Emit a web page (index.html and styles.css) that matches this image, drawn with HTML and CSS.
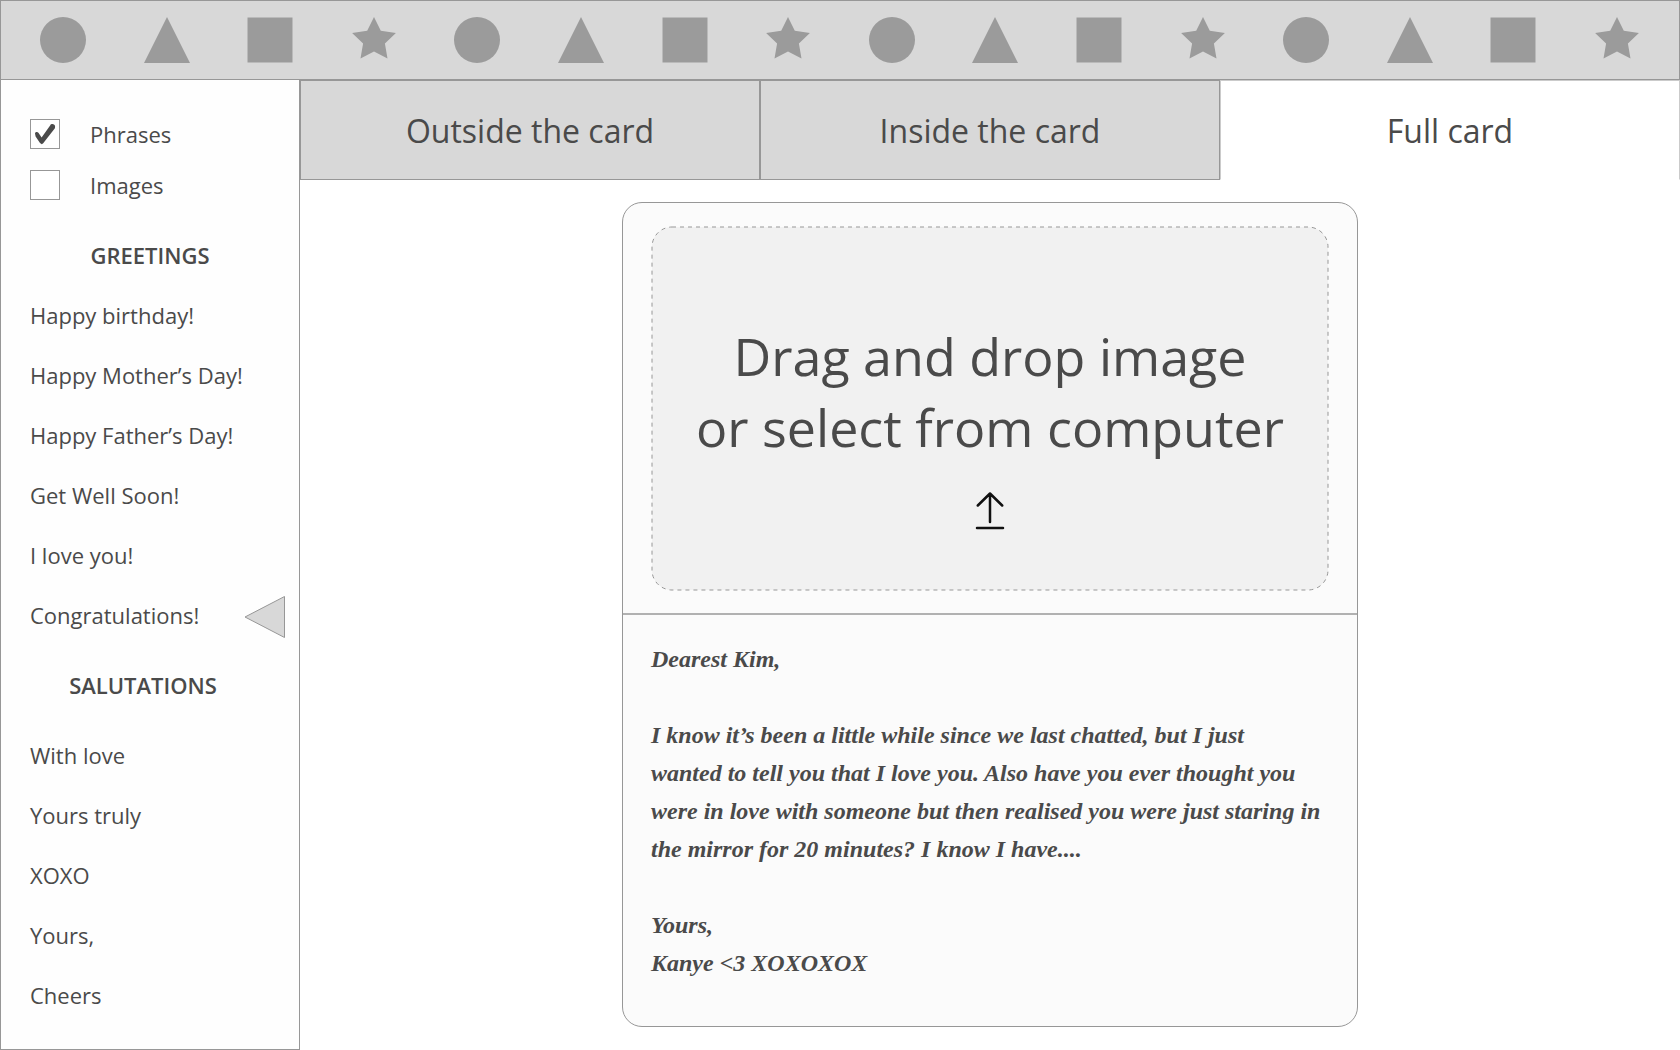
FILE: index.html
```html
<!DOCTYPE html>
<html lang="en">
<head>
<meta charset="utf-8">
<meta name="viewport" content="width=device-width, initial-scale=1">
<title>Card maker</title>
<link rel="stylesheet" href="styles.css">
</head>
<body>
<svg width="0" height="0" class="sprite" aria-hidden="true">
  <symbol id="circle" viewBox="0 0 46 46"><circle cx="23" cy="23" r="23"/></symbol>
  <symbol id="triangle" viewBox="0 0 46 46"><path d="M23 0 46 46H0z"/></symbol>
  <symbol id="square" viewBox="0 0 46 46"><path d="M.5.5h45v45H.5z"/></symbol>
  <symbol id="star" viewBox="0 0 46 46"><path d="M23 0 29.8 13.7 44.9 15.9 33.9 26.6 36.5 41.6 23 34.5 9.5 41.6 12.1 26.6 1.1 15.9 16.2 13.7z"/></symbol>
</svg>
<header class="banner">
  <svg class="shape"><use href="#circle"/></svg>
  <svg class="shape"><use href="#triangle"/></svg>
  <svg class="shape"><use href="#square"/></svg>
  <svg class="shape"><use href="#star"/></svg>
  <svg class="shape"><use href="#circle"/></svg>
  <svg class="shape"><use href="#triangle"/></svg>
  <svg class="shape"><use href="#square"/></svg>
  <svg class="shape"><use href="#star"/></svg>
  <svg class="shape"><use href="#circle"/></svg>
  <svg class="shape"><use href="#triangle"/></svg>
  <svg class="shape"><use href="#square"/></svg>
  <svg class="shape"><use href="#star"/></svg>
  <svg class="shape"><use href="#circle"/></svg>
  <svg class="shape"><use href="#triangle"/></svg>
  <svg class="shape"><use href="#square"/></svg>
  <svg class="shape"><use href="#star"/></svg>
</header>
<div class="layout">
  <aside class="sidebar">
    <div class="filters">
      <label class="filter">
        <input class="filter-box" type="checkbox" checked>
        <svg class="filter-tick" viewBox="0 0 30 30" aria-hidden="true"><path d="M5 14.6C4.8 12.8 7.600 12.200 8.600 14L11.600 18.400 20.300 6.200C21.300 4.200 25.300 5 25.100 7.800L24.900 9.200 13.200 24.200 11.800 25.200 10 24.100 5.600 17.500z"/></svg>
        <span>Phrases</span>
      </label>
      <label class="filter">
        <input class="filter-box" type="checkbox">
        <svg class="filter-tick" viewBox="0 0 30 30" aria-hidden="true"><path d="M5 14.6C4.8 12.8 7.600 12.200 8.600 14L11.600 18.400 20.300 6.200C21.300 4.200 25.300 5 25.100 7.800L24.900 9.200 13.200 24.200 11.800 25.200 10 24.100 5.600 17.500z"/></svg>
        <span>Images</span>
      </label>
    </div>
    <h2 class="group-title">GREETINGS</h2>
    <ul class="phrases">
      <li><button class="phrase" type="button">Happy birthday!</button></li>
      <li><button class="phrase" type="button">Happy Mother’s Day!</button></li>
      <li><button class="phrase" type="button">Happy Father’s Day!</button></li>
      <li><button class="phrase" type="button">Get Well Soon!</button></li>
      <li><button class="phrase" type="button">I love you!</button></li>
      <li><button class="phrase" type="button">Congratulations!
        <svg class="pointer" viewBox="0 0 42 46" aria-hidden="true"><path d="M1 25 40.500 4.500V45.500z"/></svg></button></li>
    </ul>
    <h2 class="group-title group-title-salutations">SALUTATIONS</h2>
    <ul class="phrases">
      <li><button class="phrase" type="button">With love</button></li>
      <li><button class="phrase" type="button">Yours truly</button></li>
      <li><button class="phrase" type="button">XOXO</button></li>
      <li><button class="phrase" type="button">Yours,</button></li>
      <li><button class="phrase" type="button">Cheers</button></li>
    </ul>
  </aside>
  <main class="workspace">
    <div class="tabs" role="tablist">
      <button class="tab" type="button" role="tab" aria-selected="false">Outside the card</button>
      <button class="tab" type="button" role="tab" aria-selected="false">Inside the card</button>
      <button class="tab" type="button" role="tab" aria-selected="true">Full card</button>
    </div>
    <article class="card">
      <section class="card-front">
        <label class="dropzone">
          <svg class="dropzone-outline" aria-hidden="true"><rect width="100%" height="100%" rx="20"/></svg>
          <input class="file-input" type="file" accept="image/*">
          <span>Drag and drop image<br>or select from computer</span>
          <svg class="upload" viewBox="0 0 32 40" aria-hidden="true"><path d="M16 2.500V31M3.800 14.500 16 2.500 28.200 14.500M3 37H29"/></svg>
        </label>
      </section>
      <section class="letter">
        <p>Dearest Kim,</p>
        <p>I know it’s been a little while since we last chatted, but I just<br>wanted to tell you that I love you. Also have you ever thought you<br>were in love with someone but then realised you were just staring in<br>the mirror for 20 minutes? I know I have....</p>
        <p>Yours,<br>Kanye &lt;3 XOXOXOX</p>
      </section>
    </article>
  </main>
</div>
</body>
</html>
```
FILE: styles.css
```css
* { box-sizing: border-box; }

body {
  margin: 0;
  min-height: 100vh;
  display: flex;
  flex-direction: column;
  background: #fff;
  color: #4a4a4a;
  font: 22px/30px "Open Sans", sans-serif;
}

button {
  font: inherit;
  color: inherit;
  cursor: pointer;
}

.sprite { display: none; }

.banner {
  display: flex;
  justify-content: space-between;
  padding: 16px 39px;
  border: 1px solid #979797;
  background: #d8d8d8;
}

.shape {
  width: 46px;
  height: 46px;
  fill: #9b9b9b;
}

.layout {
  flex: 1;
  display: grid;
  grid-template-columns: 300px minmax(0, 1fr);
}

.sidebar {
  padding: 39px 13px 20px 29px;
  border: solid #979797;
  border-width: 0 1px 1px;
  background: #fefefe;
}

.filters {
  display: grid;
  gap: 21px;
  margin-bottom: 25px;
}

.filter {
  display: grid;
  grid-template-columns: 30px 1fr;
  column-gap: 30px;
}

.filter-box,
.filter-tick {
  grid-area: 1 / 1;
  width: 30px;
  height: 30px;
}

.filter-box {
  appearance: none;
  margin: 0;
  border: 1px solid #979797;
  background: #fff;
}

.filter-tick {
  fill: #4a4a4a;
  visibility: hidden;
  pointer-events: none;
}

.filter-box:checked + .filter-tick { visibility: visible; }

.group-title {
  margin: 0;
  padding-right: 16px;
  font-size: 22px;
  font-weight: 600;
  line-height: 60px;
  text-align: center;
}

.group-title-salutations {
  padding-right: 30px;
  line-height: 80px;
}

.phrases {
  margin: 0;
  padding: 0;
  list-style: none;
}

.phrase {
  display: flex;
  align-items: center;
  justify-content: space-between;
  width: 100%;
  height: 60px;
  padding: 0;
  border: 0;
  background: none;
  text-align: left;
}

.pointer {
  width: 42px;
  height: 46px;
  fill: #d8d8d8;
  stroke: #979797;
}

.workspace {
  display: flex;
  flex-direction: column;
  align-items: center;
}

.tabs {
  display: grid;
  grid-template-columns: repeat(3, 1fr);
  width: 100%;
  margin-bottom: 22px;
}

.tab {
  height: 100px;
  padding: 2px 0 0;
  border: 1px solid #979797;
  background: #d8d8d8;
  font-size: 32px;
}

.tab[aria-selected="true"] {
  border-color: #cbcbcb;
  border-bottom-color: #fff;
  background: #fff;
}

.card {
  width: 100%;
  max-width: 736px;
  margin-bottom: 23px;
  border: 1px solid #979797;
  border-radius: 20px;
  background: #fbfbfb;
}

.card-front {
  padding: 24px 29px 23px;
  border-bottom: 2px solid #b1b1b1;
}

.dropzone {
  position: relative;
  display: flex;
  flex-direction: column;
  align-items: center;
  gap: 29px;
  padding: 93px 0 59px;
  border-radius: 20px;
  background: #f1f1f1;
  font-size: 52px;
  line-height: 71px;
  text-align: center;
  cursor: pointer;
}

.dropzone-outline {
  position: absolute;
  inset: 0;
  width: 100%;
  height: 100%;
  overflow: visible;
  fill: none;
  stroke: #979797;
  stroke-dasharray: 4 4;
}

.file-input {
  position: absolute;
  width: 1px;
  height: 1px;
  opacity: 0;
}

.upload {
  width: 32px;
  height: 40px;
  fill: none;
  stroke: #111;
  stroke-width: 2.5;
  stroke-linecap: round;
  stroke-linejoin: round;
}

.letter {
  padding: 25px 20px 44px 28px;
  font: italic 600 24px/38px "Brush Script MT", "Brush Script Std", "Liberation Serif", cursive;
}

.letter p { margin: 0 0 38px; }
.letter p:last-child { margin: 0; }
```
